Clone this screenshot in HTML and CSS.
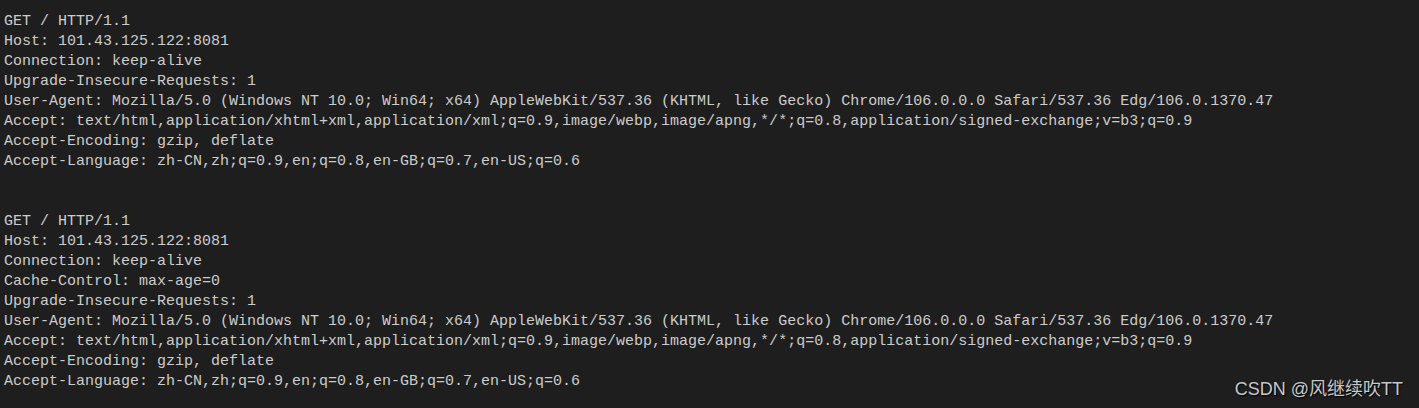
FILE: index.html
```html
<!DOCTYPE html>
<html>
<head>
<meta charset="utf-8">
<link rel="stylesheet" href="styles.css">
</head>
<body>
<div class="term">
  <div class="out">
    <div class="line">GET / HTTP/1.1</div>
    <div class="line">Host: 101.43.125.122:8081</div>
    <div class="line">Connection: keep-alive</div>
    <div class="line">Upgrade-Insecure-Requests: 1</div>
    <div class="line">User-Agent: Mozilla/5.0 (Windows NT 10.0; Win64; x64) AppleWebKit/537.36 (KHTML, like Gecko) Chrome/106.0.0.0 Safari/537.36 Edg/106.0.1370.47</div>
    <div class="line">Accept: text/html,application/xhtml+xml,application/xml;q=0.9,image/webp,image/apng,*/*;q=0.8,application/signed-exchange;v=b3;q=0.9</div>
    <div class="line">Accept-Encoding: gzip, deflate</div>
    <div class="line">Accept-Language: zh-CN,zh;q=0.9,en;q=0.8,en-GB;q=0.7,en-US;q=0.6</div>
    <div class="line blank"></div>
    <div class="line blank"></div>
    <div class="line">GET / HTTP/1.1</div>
    <div class="line">Host: 101.43.125.122:8081</div>
    <div class="line">Connection: keep-alive</div>
    <div class="line">Cache-Control: max-age=0</div>
    <div class="line">Upgrade-Insecure-Requests: 1</div>
    <div class="line">User-Agent: Mozilla/5.0 (Windows NT 10.0; Win64; x64) AppleWebKit/537.36 (KHTML, like Gecko) Chrome/106.0.0.0 Safari/537.36 Edg/106.0.1370.47</div>
    <div class="line">Accept: text/html,application/xhtml+xml,application/xml;q=0.9,image/webp,image/apng,*/*;q=0.8,application/signed-exchange;v=b3;q=0.9</div>
    <div class="line">Accept-Encoding: gzip, deflate</div>
    <div class="line">Accept-Language: zh-CN,zh;q=0.9,en;q=0.8,en-GB;q=0.7,en-US;q=0.6</div>
  </div>
  <div class="watermark">CSDN @风继续吹TT</div>
</div>
</body>
</html>
```
FILE: styles.css
```css
html, body {
  margin: 0;
  padding: 0;
  background: #1e1e1e;
}
.term {
  position: relative;
  width: 1419px;
  height: 408px;
  background: #1e1e1e;
  overflow: hidden;
}
.out {
  display: flex;
  flex-direction: column;
  align-items: flex-start;
  padding: 12px 0 0 4px;
  font-family: "Liberation Mono", "DejaVu Sans Mono", monospace;
  font-size: 15px;
  line-height: 20px;
  color: #cccccc;
}
.line {
  white-space: pre;
  min-height: 20px;
}
.watermark {
  position: absolute;
  right: 16px;
  bottom: 9px;
  font-family: "Liberation Sans", "Noto Sans CJK SC", sans-serif;
  font-size: 18px;
  line-height: 20px;
  color: #c8c8c8;
  text-shadow: 1px 1px 1px #000;
}
```
